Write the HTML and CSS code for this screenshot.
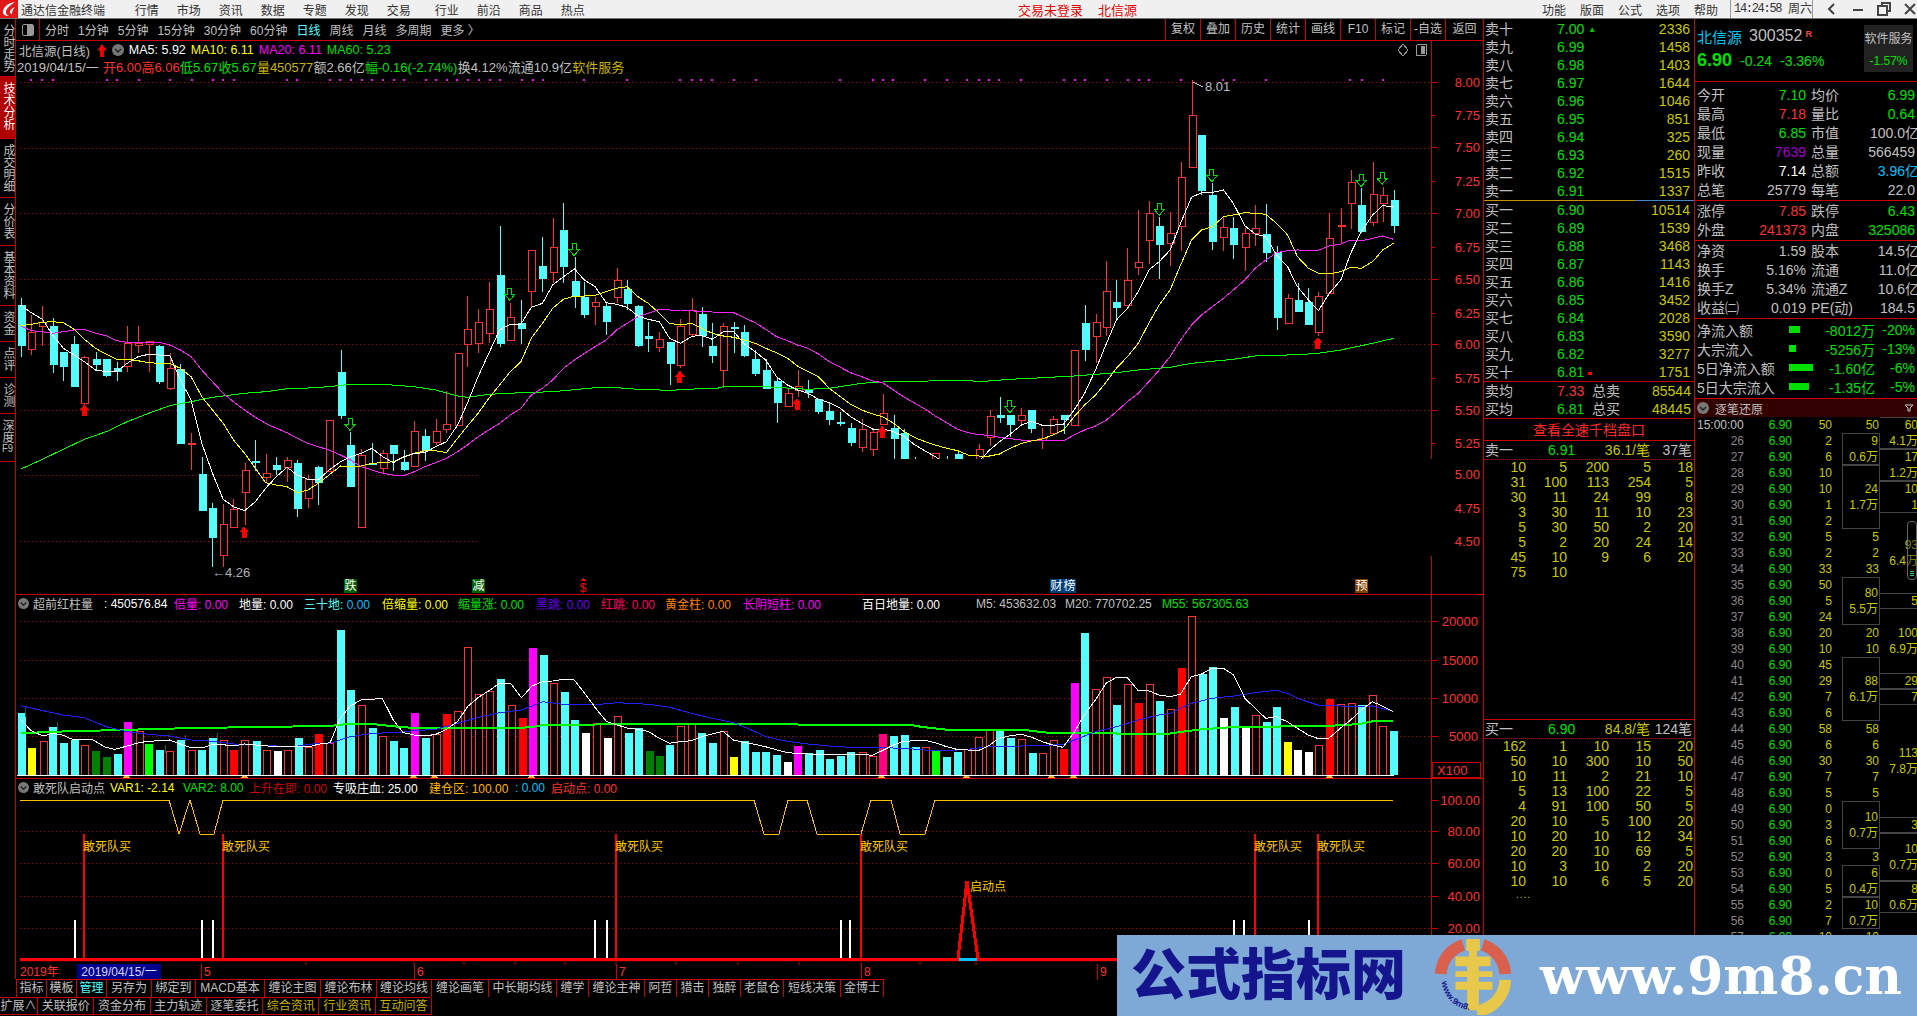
FILE: index.html
```html
<!DOCTYPE html>
<html lang="en">
<head>
    <meta charset="UTF-8">
    <title>通达信金融终端</title>
    <link rel="stylesheet" href="styles.css">
</head>
<body>
    <div class="titlebar">
        <svg class="app-logo" viewBox="0 0 18 18"><rect width="18" height="18" fill="#e01818"/><path d="M15 2C8 3 3 7 3 12c0 3 3 4 6 4-2-1-3-2-3-4 0-3 4-7 9-10z" fill="#fff"/><path d="M15 7c-3 1-5 3-5 5 0 1 1 2 2 2 0-3 1-5 3-7z" fill="#fff"/></svg>
        <span class="app-name">通达信金融终端</span>
        <nav class="menu">
            <span>行情</span><span>市场</span><span>资讯</span><span>数据</span><span>专题</span><span>发现</span><span>交易</span>
            <span class="menu-gap">行业</span><span>前沿</span><span>商品</span><span>热点</span>
        </nav>
        <span class="notice">交易未登录</span>
        <span class="notice notice-name">北信源</span>
        <nav class="menu menu-right">
            <span>功能</span><span>版面</span><span>公式</span><span>选项</span><span>帮助</span>
        </nav>
        <div class="clock"><span class="time">14:24:58</span><span>周六</span></div>
        <div class="win-btns">
            <svg viewBox="0 0 14 14"><path d="M9 2L4 7l5 5" fill="none" stroke="#444" stroke-width="2"/></svg>
            <svg viewBox="0 0 14 14"><path d="M2 8h10" stroke="#444" stroke-width="2"/></svg>
            <svg viewBox="0 0 14 14"><path d="M5 3V1h8v8h-3M1 4h9v9H1z" fill="none" stroke="#444" stroke-width="2"/></svg>
            <svg viewBox="0 0 14 14"><path d="M2 2l10 10M12 2L2 12" stroke="#444" stroke-width="2"/></svg>
        </div>
    </div>

    <div class="app">
        <div class="left">
            <div class="upper">
                <div class="side">
                    <div class="side-tab h58">分时走势</div>
                    <div class="side-tab h62 active">技术分析</div>
                    <div class="side-tab h59">成交明细</div>
                    <div class="side-tab h48">分价表</div>
                    <div class="side-tab h60">基本资料</div>
                    <div class="side-tab h36">资金</div>
                    <div class="side-tab h36">点评</div>
                    <div class="side-tab h36">诊测</div>
                    <div class="side-tab h48">深度<span class="f9">F9</span></div>
                </div>
                <div class="center">
                    <div class="toolbar">
                        <div class="tool-icon"><i></i></div>
                        <span class="period">分时</span><span class="period">1分钟</span><span class="period">5分钟</span><span class="period">15分钟</span><span class="period">30分钟</span><span class="period">60分钟</span><span class="period on">日线</span><span class="period">周线</span><span class="period">月线</span><span class="period">多周期</span><span class="period">更多 〉</span>
                        <div class="tool-right">
                            <span>复权</span><span>叠加</span><span>历史</span><span>统计</span><span>画线</span><span>F10</span><span>标记</span><span>-自选</span><span class="last">返回</span>
                        </div>
                    </div>

                    <div class="pane pane-main">
                        <svg id="mainChart" class="plot" viewBox="16 41 1467 553"></svg>
                        <div class="legend">
                            <span class="grey">北信源(日线)</span>
                            <svg class="up-mark" viewBox="0 0 10 14"><path d="M5 0l5 7H7v7H3V7H0z" fill="#f00"/></svg>
                            <svg class="chev" viewBox="0 0 12 12"><circle cx="6" cy="6" r="6" fill="#777"/><path d="M3 5l3 3 3-3" fill="none" stroke="#222" stroke-width="1.5"/></svg>
                            <span class="white">MA5: 5.92</span>
                            <span class="yellow">MA10: 6.11</span>
                            <span class="magenta">MA20: 6.11</span>
                            <span class="green">MA60: 5.23</span>
                        </div>
                        <div class="legend legend-bar">
                            <span class="grey legend-date">2019/04/15/一</span>
                            <span class="red">开6.00</span><span class="red">高6.06</span>
                            <span class="green">低5.67</span><span class="green">收5.67</span>
                            <span class="olive">量450577</span>
                            <span class="grey">额2.66亿</span>
                            <span class="green">幅-0.16(-2.74%)</span>
                            <span class="grey">换4.12%</span>
                            <span class="grey">流通10.9亿</span>
                            <span class="olive">软件服务</span>
                        </div>
                    </div>

                    <div class="pane pane-vol">
                        <svg id="volChart" class="plot" viewBox="16 594 1467 184"></svg>
                        <div class="pane-head">
                            <svg class="chev" viewBox="0 0 12 12"><circle cx="6" cy="6" r="6" fill="#777"/><path d="M3 5l3 3 3-3" fill="none" stroke="#222" stroke-width="1.5"/></svg>
                            <span class="grey w71">超前红柱量</span>
                            <span class="white w70">: 450576.84</span>
                            <span class="magenta w65">倍量: 0.00</span>
                            <span class="white w65">地量: 0.00</span>
                            <span class="cyan w78">三十地: <b class="sky">0.00</b></span>
                            <span class="yellow w76">倍缩量: 0.00</span>
                            <span class="green w78">缩量涨: 0.00</span>
                            <span class="purple w65">黑跳: 0.00</span>
                            <span class="pink w64">红跳: 0.00</span>
                            <span class="orange w78">黄金柱: 0.00</span>
                            <span class="magenta w119">长阴短柱: 0.00</span>
                            <span class="white w114">百日地量: 0.00</span>
                            <span class="grey w89">M5: 453632.03</span>
                            <span class="grey w97">M20: 770702.25</span>
                            <span class="green">M55: 567305.63</span>
                        </div>
                    </div>

                    <div class="pane pane-ind">
                        <svg id="indChart" class="plot" viewBox="16 778 1467 183"></svg>
                        <div class="pane-head">
                            <svg class="chev" viewBox="0 0 12 12"><circle cx="6" cy="6" r="6" fill="#777"/><path d="M3 5l3 3 3-3" fill="none" stroke="#222" stroke-width="1.5"/></svg>
                            <span class="grey w77">敢死队启动点</span>
                            <span class="yellow w73">VAR1: -2.14</span>
                            <span class="green w66">VAR2: 8.00</span>
                            <span class="maroon w84">上升在即: 0.00</span>
                            <span class="white w96">专吸庄血: 25.00</span>
                            <span class="gold w86">建仓区: 100.00</span>
                            <span class="sky w36">: 0.00</span>
                            <span class="red">启动点: 0.00</span>
                        </div>
                    </div>

                    <div class="date-axis">
                        <svg class="date-ticks" viewBox="0 0 1467 3"><path d="M290 0v3M398 0v3M448 0v3M499 0v3M549 0v3M600 0v3M660 0v3M722 0v3M783 0v3M845 0v3M904 0v3M960 0v3" stroke="#c00"/></svg>
                        <span class="year">2019年</span>
                        <span class="date-now">2019/04/15/一</span>
                        <span class="month m5">5</span>
                        <span class="month m6">6</span>
                        <span class="month m7">7</span>
                        <span class="month m8">8</span>
                        <span class="month m9">9</span>
                    </div>
                </div>
            </div>
            <div class="tabs tabs-one">
                <span>指标</span><span>模板</span><span class="cyan">管理</span><span>另存为</span><span>绑定到</span><span>MACD基本</span><span>缠论主图</span><span>缠论布林</span><span>缠论均线</span><span>缠论画笔</span><span>中长期均线</span><span>缠学</span><span>缠论主神</span><span>阿哲</span><span>猎击</span><span>独醉</span><span>老鼠仓</span><span>短线决策</span><span>金博士</span>
            </div>
            <div class="tabs tabs-two">
                <span>扩展∧</span><span>关联报价</span><span>资金分布</span><span>主力轨迹</span><span>逐笔委托</span><span class="olive">综合资讯</span><span class="olive">行业资讯</span><span class="olive">互动问答</span>
            </div>
        </div>

        <div class="book">
            <div id="sellRows"></div>
            <div class="mid-line"></div>
            <div id="buyRows"></div>
            <div class="avg-block">
                <div class="avg-row"><span class="grey">卖均</span><span class="red">7.33</span><span class="grey">总卖</span><span class="qty">85544</span></div>
                <div class="avg-row"><span class="grey">买均</span><span class="green">6.81</span><span class="grey">总买</span><span class="qty">48445</span></div>
            </div>
            <div class="deep-link">查看全速千档盘口</div>
            <div class="queue queue-sell">
                <div class="queue-head"><span class="grey">卖一</span><span class="green">6.91</span><span class="qty">36.1/笔</span><span class="grey">37笔</span></div>
                <div id="sellQueue" class="queue-grid"></div>
            </div>
            <div class="queue queue-buy">
                <div class="queue-head"><span class="grey">买一</span><span class="green">6.90</span><span class="qty">84.8/笔</span><span class="grey">124笔</span></div>
                <div id="buyQueue" class="queue-grid"></div>
                <div class="queue-more">....</div>
            </div>
        </div>

        <div class="quote">
            <div class="stock-head">
                <div class="stock-info">
                    <div class="stock-name"><span class="stock-title">北信源</span><span class="stock-code">300352</span><span class="stock-r">R</span></div>
                    <div class="stock-price"><b>6.90</b><span>-0.24</span><span>-3.36%</span></div>
                </div>
                <div class="sector"><span>软件服务</span><span class="green">-1.57%</span></div>
            </div>
            <div class="q-block q-first">
                <div class="q-row"><span>今开</span><span class="green">7.10</span><span>均价</span><span class="green">6.99</span></div>
                <div class="q-row"><span>最高</span><span class="red">7.18</span><span>量比</span><span class="green">0.64</span></div>
                <div class="q-row"><span>最低</span><span class="green">6.85</span><span>市值</span><span class="grey cut">100.0亿</span></div>
                <div class="q-row"><span>现量</span><span class="violet">7639</span><span>总量</span><span class="grey">566459</span></div>
                <div class="q-row"><span>昨收</span><span class="white">7.14</span><span>总额</span><span class="sky cut">3.96亿</span></div>
                <div class="q-row"><span>总笔</span><span class="grey">25779</span><span>每笔</span><span class="grey">22.0</span></div>
            </div>
            <div class="q-block">
                <div class="q-row"><span>涨停</span><span class="red">7.85</span><span>跌停</span><span class="green">6.43</span></div>
                <div class="q-row"><span>外盘</span><span class="red">241373</span><span>内盘</span><span class="green">325086</span></div>
            </div>
            <div class="q-block">
                <div class="q-row"><span>净资</span><span class="grey">1.59</span><span>股本</span><span class="grey cut">14.5亿</span></div>
                <div class="q-row"><span>换手</span><span class="grey">5.16%</span><span>流通</span><span class="grey cut">11.0亿</span></div>
                <div class="q-row"><span>换手Z</span><span class="grey">5.34%</span><span>流通Z</span><span class="grey cut">10.6亿</span></div>
                <div class="q-row"><span>收益㈡</span><span class="grey">0.019</span><span>PE(动)</span><span class="grey">184.5</span></div>
            </div>
            <div class="q-block q-last">
                <div class="flow-row"><span>净流入额</span><i class="flow-bar w11"></i><span class="green flow-val">-8012万</span><span class="green flow-pct">-20%</span></div>
                <div class="flow-row"><span>大宗流入</span><i class="flow-bar w7"></i><span class="green flow-val">-5256万</span><span class="green flow-pct">-13%</span></div>
                <div class="flow-row"><span>5日净流入额</span><i class="flow-bar w24"></i><span class="green flow-val">-1.60亿</span><span class="green flow-pct">-6%</span></div>
                <div class="flow-row"><span>5日大宗流入</span><i class="flow-bar w20"></i><span class="green flow-val">-1.35亿</span><span class="green flow-pct">-5%</span></div>
            </div>
            <div class="tick-head">
                <svg class="chev big" viewBox="0 0 12 12"><circle cx="6" cy="6" r="6" fill="#777"/><path d="M3 5l3 3 3-3" fill="none" stroke="#222" stroke-width="1.5"/></svg>
                <span>逐笔还原</span>
                <svg class="funnel" viewBox="0 0 8 8"><path d="M0 1h8L5 4v3H3V4z" fill="none" stroke="#ccc"/></svg>
            </div>
            <div id="ticks" class="ticks"></div>
            <div class="scroll-thumb"><i></i><i></i><i></i></div>
        </div>
    </div>

    <div class="watermark">
        <span class="wm-name">公式指标网</span>
        <svg class="wm-logo" viewBox="0 0 80 80">
            <defs><path id="wmArc" d="M8 46A32 32 0 0 0 38 75"/></defs>
            <path d="M7 38A33 33 0 0 1 30 8M50 8A33 33 0 0 1 73 38" fill="none" stroke="#d8604c" stroke-width="12"/>
            <path d="M73 44A33 33 0 0 1 44 76" fill="none" stroke="#e8c84a" stroke-width="12"/>
            <path d="M33 2h14v12h-3v6h14v10H46v5h14v6H46v5h14v8H46v21H34V54H22v-8h12v-5H22v-6h12v-5H22V20h14v-6h-3z" fill="#e8c84a"/>
            <text class="wm-arc-text"><textPath href="#wmArc">www.9m8.cn</textPath></text>
        </svg>
        <span class="wm-url">www.9m8.cn</span>
    </div>

    <script src="chart.js"></script>
</body>
</html>
```

FILE: styles.css
```css
* {
    box-sizing: border-box;
}

html, body {
    margin: 0;
    width: 1917px;
    height: 1016px;
    overflow: hidden;
}

body {
    position: relative;
    background: #000;
    color: #c0c0c0;
    font-family: "Liberation Sans", "Noto Sans CJK SC", sans-serif;
    font-size: 12px;
}

b { font-weight: normal; }

.grey { color: #c0c0c0; }
.white { color: #fff; }
.yellow { color: #ff0; }
.magenta { color: #f0f; }
.green { color: #00e000; }
.red { color: #ff3232; }
.olive { color: #c8b400; }
.cyan { color: #54fcfc; }
.sky { color: #00c0ff; }
.purple { color: #6a00f0; }
.pink { color: #ff0060; }
.orange { color: #ff8000; }
.maroon { color: #d00000; }
.gold { color: #ffb400; }
.violet { color: #a000d0; }

/* title bar */
.titlebar {
    display: flex;
    align-items: center;
    height: 19px;
    background: #f0f0f0;
    color: #333;
    border-bottom: 1px solid #777;
    white-space: nowrap;
}

.app-logo {
    width: 18px;
    height: 18px;
    flex: none;
}

.app-name {
    margin-left: 3px;
    width: 116px;
}

.menu {
    display: flex;
    gap: 18px;
}

.menu .menu-gap {
    margin-left: 6px;
}

.notice {
    margin-left: 433px;
    color: #e00000;
    font-size: 13px;
}

.notice-name {
    margin-left: 15px;
}

.menu-right {
    margin-left: 405px;
    gap: 14px;
}

.clock {
    display: flex;
    gap: 7px;
    width: 84px;
    height: 18px;
    line-height: 18px;
    margin-left: 12px;
    padding-left: 3px;
    border-left: 1px solid #999;
    border-right: 1px solid #999;
}

.time {
    font-family: "Liberation Mono", monospace;
    font-size: 12px;
    letter-spacing: -1.3px;
    width: 47px;
}

.win-btns {
    display: flex;
    gap: 12px;
    margin-left: 12px;
}

.win-btns svg {
    width: 14px;
    height: 14px;
}

/* layout */
.app {
    display: flex;
    height: 997px;
}

.left {
    width: 1483px;
    flex: none;
}

.upper {
    display: flex;
    height: 960px;
}

/* vertical tabs */
.side {
    width: 16px;
    flex: none;
    border-right: 1px solid #c00;
}

.side-tab {
    writing-mode: vertical-rl;
    text-orientation: upright;
    width: 15px;
    padding-top: 5px;
    line-height: 15px;
    border-bottom: 1px solid #c00;
    font-size: 12px;
    letter-spacing: 0;
}

.side-tab.active {
    background: #b00000;
    color: #fff;
}

.f9 {
    text-combine-upright: all;
    font-size: 10px;
}

.h36 { height: 36px; }
.h48 { height: 48px; }
.h58 { height: 58px; }
.h59 { height: 59px; }
.h60 { height: 60px; }
.h62 { height: 62px; }

.center {
    flex: 1;
    min-width: 0;
}

/* period toolbar */
.toolbar {
    display: flex;
    align-items: center;
    height: 22px;
    border-bottom: 1px solid #c00;
}

.tool-icon {
    display: flex;
    align-items: center;
    justify-content: center;
    width: 24px;
    height: 21px;
    margin-right: 5px;
    border-right: 1px solid #c00;
}

.tool-icon i {
    width: 12px;
    height: 12px;
    border: 1px solid #999;
    border-radius: 2px;
    background: linear-gradient(90deg, #000 45%, #999 45%);
}

.period {
    margin-right: 9px;
    white-space: nowrap;
}

.period.on {
    color: #54fcfc;
}

.tool-right {
    display: flex;
    margin-left: auto;
    height: 21px;
}

.tool-right span {
    width: 35px;
    line-height: 21px;
    text-align: center;
    border-left: 1px solid #c00;
}

.tool-right .last {
    width: 38px;
}

/* chart panes */
.pane {
    position: relative;
    overflow: hidden;
}

.pane-main { height: 553px; }
.pane-vol { height: 184px; }
.pane-ind { height: 183px; }

.plot {
    position: absolute;
    left: 0;
    top: 0;
    width: 1467px;
    height: 100%;
    shape-rendering: crispEdges;
}

.plot text {
    font-family: "Liberation Sans", "Noto Sans CJK SC", sans-serif;
}

.legend {
    position: relative;
    display: flex;
    align-items: center;
    gap: 5px;
    height: 16px;
    margin-top: 1px;
    padding-left: 3px;
    font-size: 12.5px;
    white-space: nowrap;
}

.legend-bar {
    gap: 0.2px;
    margin-top: 0;
    padding-left: 1px;
    font-size: 13px;
}

.legend-date {
    margin-right: 4px;
}

.up-mark {
    width: 10px;
    height: 13px;
    margin-left: 2px;
}

.chev {
    width: 12px;
    height: 12px;
    flex: none;
}

.pane-head {
    position: relative;
    display: flex;
    align-items: center;
    height: 17px;
    margin-top: 1px;
    padding-left: 2px;
    white-space: nowrap;
}

.pane-head .chev {
    margin-right: 4px;
    width: 11px;
    height: 11px;
}

.w36 { width: 36px; }
.w64 { width: 64px; }
.w65 { width: 65px; }
.w66 { width: 66px; }
.w70 { width: 70px; }
.w71 { width: 71px; }
.w73 { width: 73px; }
.w76 { width: 76px; }
.w77 { width: 77px; }
.w78 { width: 78px; }
.w84 { width: 84px; }
.w86 { width: 86px; }
.w89 { width: 89px; }
.w96 { width: 96px; }
.w97 { width: 97px; }
.w114 { width: 114px; }
.w119 { width: 119px; }

/* date axis */
.date-axis {
    position: relative;
    height: 18px;
    line-height: 16px;
    color: #ff3232;
    border-top: 1px solid #300;
}

.date-ticks {
    position: absolute;
    left: 0;
    top: 0;
    width: 1467px;
    height: 3px;
}

.year {
    position: absolute;
    left: 4px;
    top: 2px;
}

.date-now {
    position: absolute;
    left: 61px;
    top: 2px;
    width: 84px;
    height: 15px;
    background: #000090;
    color: #d8d8ff;
    text-align: center;
}

.month {
    position: absolute;
    top: 2px;
    padding-left: 2px;
    border-left: 1px solid #c00;
}

.m5 { left: 185px; }
.m6 { left: 398px; }
.m7 { left: 600px; }
.m8 { left: 845px; }
.m9 { left: 1081px; }

/* bottom tabs */
.tabs {
    display: grid;
    height: 18px;
    line-height: 17px;
    border-top: 1px solid #c00;
    white-space: nowrap;
}

.tabs span {
    text-align: center;
    border-right: 1px solid #c00;
}

.tabs-one {
    margin-left: 16px;
    width: 869px;
    border-left: 1px solid #c00;
    grid-template-columns: 30px 30px 30px 45px 44px 69px 56px 56px 55px 57px 68px 32px 56px 32px 32px 32px 43px 57px 43px;
}

.tabs-two {
    width: 431px;
    border-bottom: 1px solid #c00;
    height: 18px;
    grid-template-columns: 38px repeat(7, 56.3px);
}

/* order book */
.book {
    width: 212px;
    flex: none;
    border-left: 1px solid #c00;
    border-right: 1px solid #c00;
    font-size: 14px;
    white-space: nowrap;
}

#sellRows {
    padding-top: 1px;
}

.ob-row {
    display: grid;
    grid-template-columns: 72px 1fr auto;
    height: 18px;
    line-height: 18px;
    padding: 0 4px 0 1px;
}

.ob-row .qty, .qty {
    color: #c8c800;
}

.ob-mark {
    display: inline-block;
    margin-left: 4px;
    vertical-align: middle;
}

.mark-up {
    color: #0c0;
    font-size: 8px;
}

.mark-dn {
    width: 4px;
    height: 3px;
    background: #f00;
}

.mid-line {
    height: 1px;
    background: linear-gradient(90deg, #c89000 72%, #4488cc 72%);
}

#buyRows {
    border-bottom: 1px solid #c00;
}

.avg-block {
    border-bottom: 1px solid #c00;
    height: 37px;
}

.avg-row {
    display: grid;
    grid-template-columns: 72px 35px 60px 1fr;
    height: 18px;
    line-height: 18px;
    padding: 0 4px 0 1px;
}

.avg-row span:last-child {
    text-align: right;
}

.deep-link {
    height: 22px;
    line-height: 22px;
    text-align: center;
    color: #ff2828;
    border-bottom: 1px solid #c00;
}

.queue-sell {
    height: 279px;
    border-bottom: 1px solid #c00;
}

.queue-head {
    display: grid;
    grid-template-columns: 63px 40px 62px 1fr;
    height: 19px;
    line-height: 19px;
    padding: 0 2px 0 1px;
    border-bottom: 1px dotted #c00;
}

.queue-head span:nth-child(n+3) {
    text-align: right;
}

.queue-grid {
    display: grid;
    grid-template-columns: 41px 41px 42px 42px 42px;
    grid-auto-rows: 15px;
    line-height: 15px;
    padding-left: 1px;
    color: #c8c800;
    text-align: right;
}

.queue-more {
    margin-left: 32px;
    line-height: 12px;
    color: #c8c800;
    font-size: 10px;
    letter-spacing: 1px;
}

/* quote column */
.quote {
    position: relative;
    flex: 1;
    min-width: 0;
    overflow: hidden;
    font-size: 14px;
    white-space: nowrap;
}

.stock-head {
    display: flex;
    justify-content: space-between;
    height: 62px;
    padding: 6px 4px 0 2px;
}

.stock-info {
    padding-top: 1px;
}

.stock-name {
    display: flex;
    align-items: center;
    height: 20px;
}

.stock-title {
    color: #00c8f0;
    font-size: 15px;
}

.stock-code {
    margin-left: 7px;
    font-size: 16px;
}

.stock-r {
    margin-left: 3px;
    margin-top: -5px;
    color: #ff4040;
    font-size: 9px;
    font-weight: bold;
}

.stock-price {
    display: flex;
    align-items: baseline;
    gap: 8px;
    margin-top: 4px;
    color: #00e000;
}

.stock-price b {
    font-size: 18px;
    font-weight: bold;
}

.sector {
    display: flex;
    flex-direction: column;
    justify-content: space-around;
    align-items: center;
    width: 49px;
    height: 47px;
    margin-top: 0;
    background: #222;
    font-size: 12px;
}

.q-block {
    padding-top: 1px;
    border-top: 1px solid #c00;
}

.q-first {
    padding-top: 4px;
}

.q-last {
    padding-bottom: 2px;
}

.q-row {
    display: grid;
    grid-template-columns: 50px 59px 57px 1fr;
    height: 19px;
    line-height: 19px;
    padding: 0 2px;
}

.q-row span:nth-child(even) {
    text-align: right;
}

.q-row span:nth-child(3) {
    padding-left: 5px;
}

.q-row .cut {
    margin-right: -4px;
}

.flow-row {
    display: flex;
    align-items: center;
    height: 19px;
    padding: 0 1px 0 2px;
}

.flow-row span:first-child {
    width: 92px;
}

.flow-bar {
    height: 7px;
    background: #00e000;
}

.flow-val {
    position: absolute;
    right: 42px;
}

.flow-pct {
    position: absolute;
    right: 2px;
}

.w7 { width: 7px; }
.w11 { width: 11px; }
.w20 { width: 20px; }
.w24 { width: 24px; }

.tick-head {
    display: flex;
    align-items: center;
    height: 19px;
    padding-left: 2px;
    background: #300;
    border-top: 1px solid #c00;
    font-size: 12px;
}

.chev.big {
    width: 12px;
    height: 12px;
    margin-right: 6px;
}

.funnel {
    width: 8px;
    height: 8px;
    margin-left: auto;
    margin-right: 4px;
}

.ticks {
    display: grid;
    grid-template-columns: 49px 48px 40px 48px 37px;
    grid-auto-rows: 16px;
    height: 518px;
    overflow: hidden;
    line-height: 16px;
    font-size: 12px;
    text-align: right;
}

.tick-time { text-align: left; padding-left: 2px; grid-column: 1; }
.tick-no { color: #888; }
.tick-price { color: #00e000; }
.tick-qty, .tick-sum { color: #c8c800; }

.tick-sum {
    display: flex;
    flex-direction: column;
    justify-content: center;
    padding-right: 1px;
    overflow: hidden;
}

.col4.boxed {
    margin-left: 10px;
    border: 1px solid #444;
}

.col5.boxed {
    border-top: 1px solid #444;
    border-bottom: 1px solid #444;
}

.col5 {
    margin-right: -2px;
}

.scroll-thumb {
    position: absolute;
    right: 0;
    top: 502px;
    display: flex;
    flex-direction: column;
    justify-content: flex-end;
    gap: 1px;
    width: 10px;
    height: 59px;
    padding: 0 2px 3px;
    border: 1px solid #666;
    border-radius: 4px;
    background: rgba(0, 0, 0, 0.4);
}

.scroll-thumb i {
    height: 1px;
    background: #3c8;
}

/* watermark strip */
.watermark {
    position: absolute;
    left: 1117px;
    top: 935px;
    display: flex;
    align-items: center;
    width: 800px;
    height: 81px;
    background: #7ea9d6;
    white-space: nowrap;
}

.wm-name {
    margin-left: 14px;
    color: #14148c;
    font-size: 55px;
    line-height: 81px;
    font-weight: 900;
    letter-spacing: 0;
}

.wm-logo {
    width: 78px;
    height: 78px;
    margin-left: 28px;
}

.wm-arc-text {
    font-family: "Liberation Sans", sans-serif;
    font-size: 9px;
    font-weight: bold;
    fill: #14148c;
}

.wm-url {
    margin-left: 28px;
    color: #fff;
    font-family: "DejaVu Serif", serif;
    font-size: 52px;
    line-height: 81px;
    font-weight: bold;
}
```

FILE: chart.js
```js
// screen positions were read off the chart, x,y per series
const CYAN = '#54fcfc', RED = '#ff3232';

const lx = z => z / 2.24;
const rx = z => 700 + z / 2.01;
const py = z => 60 + z / 3;

// x, body top, body bottom, high, low, type (c cyan, r hollow red, f flat red)
const candlesL = [
    [46,735,857,715,890,'c'],[70,817,866,765,885,'r'],[95,785,797,738,857,'r'],[118,798,915,775,938,'c'],
    [142,877,920,877,962,'c'],[166,852,980,828,980,'c'],[189,890,1030,888,1030,'r'],[214,897,915,877,930,'c'],
    [238,897,947,897,952,'c'],[261,925,936,905,962,'c'],[285,850,918,798,935,'r'],[309,850,855,798,880,'r'],
    [333,842,852,842,935,'r'],[357,858,965,855,972,'c'],[380,925,983,880,990,'r'],[404,927,1151,912,1151,'c'],
    [428,1150,1155,1118,1230,'f'],[452,1242,1352,1190,1352,'c'],[476,1344,1433,1330,1520,'c'],[500,1393,1484,1332,1520,'r'],
    [523,1348,1400,1318,1403,'r'],[548,1231,1295,1208,1395,'r'],[572,1203,1208,1140,1232,'c'],[595,1240,1252,1182,1268,'r'],
    [619,1215,1230,1190,1245,'c'],[642,1201,1220,1190,1265,'r'],[666,1210,1346,1200,1370,'c'],[690,1258,1315,1245,1343,'r'],
    [713,1221,1270,1218,1335,'c'],[737,1081,1232,1081,1232,'r'],[763,936,1067,870,1078,'c'],[785,1156,1280,1117,1280,'c'],
    [809,1184,1400,1168,1400,'r'],[833,1210,1213,1150,1215,'c'],[857,1178,1223,1170,1238,'r'],[881,1156,1182,1156,1232,'c'],
    [904,1207,1230,1170,1232,'c'],[928,1114,1217,1083,1220,'r'],[952,1128,1172,1107,1202,'c'],[976,1114,1145,1077,1155,'r'],
    [1000,1093,1108,993,1118,'r'],[1025,880,1096,880,1096,'r'],[1047,808,853,708,920,'r'],[1071,785,848,747,878,'r'],
    [1095,747,818,667,850,'r'],[1119,645,852,498,862,'c'],[1143,772,841,730,842,'r'],[1167,790,808,720,852,'c'],
    [1190,571,694,571,742,'r'],[1215,618,656,530,695,'c'],[1238,562,637,473,668,'r'],[1262,510,621,430,668,'c'],
    [1287,663,710,592,745,'c'],[1309,710,765,665,775,'c'],[1333,727,739,712,795,'r'],[1358,738,785,725,825,'c'],
    [1381,661,710,625,730,'r'],[1405,687,732,660,750,'c'],[1429,738,858,735,860,'c'],[1452,828,836,785,875,'c'],
    [1477,838,862,815,875,'r'],[1500,847,911,847,975,'c'],[1524,799,915,778,925,'r'],[1549,750,823,714,830,'r']
];
const candlesR = [
    [4,762,828,740,860,'c'],[25,858,888,790,908,'c'],[47,799,931,790,985,'r'],[68,802,806,785,880,'c'],
    [89,816,888,795,890,'c'],[111,897,942,870,947,'c'],[132,930,986,897,988,'c'],[154,963,1028,955,1088,'c'],
    [176,1000,1037,985,1037,'r'],[196,977,990,930,1010,'r'],[217,990,998,960,1013,'c'],[238,1016,1056,1016,1062,'c'],
    [260,1053,1079,1030,1094,'c'],[282,1085,1087,1055,1098,'c'],[303,1104,1148,1090,1157,'c'],[325,1108,1160,1078,1175,'r'],
    [347,1117,1166,1105,1187,'r'],[367,1058,1093,1002,1093,'r'],[389,1104,1137,1065,1250,'c'],[411,1120,1250,1108,1250,'c'],
    [432,1196,1250,1190,1250,'c'],[473,1180,1250,1180,1250,'r'],[496,1250,1250,1188,1250,'c'],[518,1183,1250,1170,1250,'c'],
    [560,1168,1250,1152,1250,'r'],[582,1069,1130,1050,1157,'r'],[602,1065,1073,1012,1090,'c'],[624,1065,1095,1065,1130,'c'],
    [646,1066,1079,1045,1098,'r'],[666,1050,1106,1050,1118,'c'],[688,1133,1141,1105,1167,'r'],[709,1077,1120,1067,1125,'r'],
    [731,1066,1080,1066,1122,'c'],[752,871,1096,871,1096,'r'],[773,790,870,735,902,'c'],[795,787,829,762,910,'r'],
    [817,694,800,603,828,'r'],[837,727,743,660,778,'c'],[859,661,735,565,735,'r'],[881,607,620,450,645,'r'],
    [902,460,539,423,612,'r'],[923,498,554,472,658,'c'],[945,520,548,456,618,'r'],[966,352,497,306,572,'r'],
    [988,166,320,60,320,'r'],[1008,225,392,225,405,'c'],[1030,405,545,370,570,'c'],[1052,500,532,468,572,'r'],
    [1072,505,554,470,597,'c'],[1095,520,560,505,634,'r'],[1116,505,518,435,558,'r'],[1137,522,578,433,605,'c'],
    [1159,575,773,558,810,'c'],[1181,715,788,703,790,'r'],[1201,721,755,670,755,'c'],[1223,727,794,685,795,'c'],
    [1243,709,815,695,828,'r'],[1265,535,698,460,698,'r'],[1288,496,499,445,548,'f'],[1308,367,430,330,507,'r'],
    [1329,435,516,385,518,'c'],[1352,403,485,307,497,'r'],[1372,406,430,381,485,'r'],[1394,420,497,390,520,'c']
];

const ma5 = [[46,735,70,758,95,778,118,825,142,865,166,885,189,905,214,930,238,935,261,935,285,910,309,890,333,883,357,885,380,885,404,960,428,1020,452,1150,476,1240,500,1318,523,1340,548,1352,572,1325,595,1285,619,1250,643,1222,666,1245,690,1258,713,1260,737,1230,763,1205,785,1190,809,1180,833,1165,857,1190,881,1208,904,1190,928,1180,952,1178,976,1160,1000,1145,1025,1095,1047,1030,1071,950,1095,880,1119,810,1143,793,1167,792,1190,742,1215,730,1238,675,1262,650,1287,627,1309,660,1333,680,1358,728,1381,733,1405,742,1429,768,1452,778,1477,785,1500,835,1524,850,1549,830],
    [0,825,25,838,47,815,68,815,89,852,111,875,132,900,154,950,176,975,196,990,217,1000,238,1018,260,1028,282,1045,303,1070,325,1090,347,1107,367,1107,389,1115,411,1130,432,1155,473,1190,496,1215,539,1230,560,1205,582,1170,602,1145,624,1122,646,1095,666,1084,688,1096,709,1096,731,1092,752,1050,773,1000,795,930,817,850,837,780,859,745,881,695,902,630,923,605,945,570,966,490,988,412,1008,398,1030,397,1052,390,1072,430,1095,497,1116,522,1137,530,1159,585,1181,620,1201,680,1223,720,1243,752,1265,700,1288,660,1308,580,1329,515,1352,465,1372,437,1394,440]];
const ma10 = [[46,797,70,793,95,787,118,785,142,788,166,808,189,838,214,865,238,883,261,898,285,898,309,902,333,908,357,910,380,910,404,925,428,950,452,1010,476,1050,500,1090,523,1140,548,1180,572,1225,595,1268,619,1275,643,1280,666,1298,690,1290,713,1270,737,1245,763,1218,785,1220,809,1218,833,1210,857,1208,881,1205,904,1192,928,1180,952,1172,976,1172,1000,1178,1025,1135,1047,1098,1071,1060,1095,1015,1119,975,1143,935,1167,905,1190,835,1215,790,1238,745,1262,718,1287,708,1309,708,1333,706,1358,695,1381,685,1405,680,1429,710,1452,730,1477,760,1500,790,1524,795,1549,790],
    [0,803,25,820,47,828,68,832,89,840,111,850,132,865,154,878,176,895,196,918,217,935,238,950,260,985,282,1010,303,1033,325,1050,347,1062,367,1070,389,1090,411,1115,432,1133,453,1145,473,1155,496,1165,518,1172,539,1185,560,1188,582,1188,602,1182,624,1165,646,1150,666,1143,688,1137,709,1125,731,1110,752,1070,773,1035,795,1005,817,965,837,925,859,890,881,850,902,790,923,735,945,690,966,615,988,540,1008,510,1030,500,1052,470,1072,465,1095,458,1116,460,1137,463,1159,490,1181,525,1201,590,1223,625,1243,640,1265,642,1288,635,1308,622,1329,625,1352,605,1372,570,1394,550]];
const ma20 = [[46,797,70,812,95,815,118,820,142,815,166,810,189,808,214,820,238,827,261,842,285,847,333,847,357,847,380,855,404,870,428,890,452,930,476,965,500,1000,523,1025,548,1050,572,1072,595,1090,619,1105,643,1118,666,1135,690,1150,713,1160,737,1170,763,1185,785,1200,809,1220,833,1230,857,1240,881,1245,904,1247,928,1235,952,1220,976,1208,1000,1195,1025,1175,1047,1155,1071,1130,1095,1110,1119,1090,1143,1065,1167,1045,1190,1005,1215,985,1238,960,1262,925,1287,900,1309,880,1333,860,1358,840,1381,810,1405,790,1429,770,1452,760,1477,748,1500,750,1524,750,1549,752],
    [0,755,25,756,68,758,89,773,111,788,132,808,154,830,176,842,196,855,217,865,238,882,260,905,282,922,303,938,325,950,347,963,367,968,389,990,411,1012,432,1030,453,1048,473,1068,496,1088,518,1108,539,1118,560,1124,582,1126,602,1132,624,1136,646,1140,666,1140,688,1143,731,1142,752,1125,773,1110,795,1098,817,1080,837,1055,859,1025,881,1000,902,965,923,930,945,890,966,840,988,795,1008,765,1030,740,1052,715,1072,690,1095,660,1116,625,1137,600,1159,578,1181,572,1201,570,1243,571,1265,558,1288,552,1308,540,1329,543,1352,535,1372,528,1394,538]];
const ma60 = [[46,1228,95,1198,142,1168,189,1138,238,1115,285,1085,333,1060,380,1037,428,1025,476,1012,548,1000,595,995,643,986,690,984,737,980,785,973,857,973,928,980,976,990,1025,1008,1047,1012,1095,1003,1167,998,1238,995,1333,983,1381,983,1429,988,1500,991,1549,988],
    [0,985,35,985,47,980,132,980,217,988,260,985,325,970,367,966,460,963,545,962,560,965,624,958,666,955,752,948,837,938,881,930,945,922,988,910,1072,898,1116,888,1201,884,1243,880,1288,870,1352,850,1394,835]];

const dotsL = [68,92,116,238,260,308,378,428,474,497,522,640,664,736,760,784,808,830,855,880,903,952,975,1000,1022,1047,1070,1095,1118,1167,1192,1214,1307,1403,1522,1548];
const dotsR = [0,22,65,107,273,337,357,377,440,482,522,545,565,585,628,711,733,753,795,836,858,878,941,1024,1045,1107,1273,1296,1337];

function seriesPoints(parts, fxs, fy) {
    let pts = [];
    parts.forEach((arr, p) => {
        for (let i = 0; i < arr.length; i += 2) {
            pts.push(fxs[p](arr[i]).toFixed(1) + ',' + fy(arr[i + 1]).toFixed(1));
        }
    });
    return pts.join(' ');
}

function polyline(points, color, width) {
    return `<polyline points="${points}" fill="none" stroke="${color}" stroke-width="${width || 1}"/>`;
}

function gridLine(x1, x2, y) {
    return `<line x1="${x1}" x2="${x2}" y1="${y + 0.5}" y2="${y + 0.5}" stroke="#c00000" stroke-dasharray="1 3"/>`;
}

function axisLabel(text, y, x) {
    return `<text x="${x || 1480}" y="${y + 5}" text-anchor="end" font-size="13" fill="#ff3232">${text}</text>`;
}

function drawCandle(c, fx) {
    const x = Math.round(fx(c[0]));
    const top = Math.round(py(c[1])), bot = Math.round(py(c[2]));
    const hi = py(c[3]), lo = py(c[4]);
    const color = c[5] === 'c' ? CYAN : RED;
    let s = `<line x1="${x + 0.5}" x2="${x + 0.5}" y1="${hi}" y2="${top}" stroke="${color}"/>`;
    s += `<line x1="${x + 0.5}" x2="${x + 0.5}" y1="${bot}" y2="${lo}" stroke="${color}"/>`;
    if (c[5] === 'r') {
        s += `<rect x="${x - 3 + 0.5}" y="${top + 0.5}" width="7" height="${bot - top}" fill="#000" stroke="${color}"/>`;
    } else {
        s += `<rect x="${x - 3}" y="${top}" width="8" height="${Math.max(bot - top, 2)}" fill="${color}"/>`;
    }
    return s;
}

function upArrow(x, y) {
    return `<path transform="translate(${x} ${y})" d="M0 -6l5 6h-2.5v6h-5v-6h-2.5z" fill="#f00"/>`;
}

function downArrow(x, y) {
    return `<path transform="translate(${x} ${y})" d="M-2 -6h4v6h3l-5 6l-5 -6h3z" fill="#000" stroke="#00e000"/>`;
}

function marker(x, text, bg, fg) {
    return `<rect x="${x - 6}" y="579" width="13" height="14" fill="${bg}"/><text x="${x + 0.5}" y="590" text-anchor="middle" font-size="12" fill="${fg}">${text}</text>`;
}

function drawMain() {
    const fxs = [lx, rx];
    let s = '';
    [[82, 1431], [148, 1431], [213, 1431], [279, 1431], [344, 1431], [410, 1431], [475, 478], [541, 478]].forEach(g => {
        s += gridLine(20, g[1], g[0]);
    });
    dotsL.forEach(d => { s += `<rect x="${Math.round(lx(d))}" y="79" width="2" height="2" fill="#f0f"/>`; });
    dotsR.forEach(d => { s += `<rect x="${Math.round(700 + d / 1.96)}" y="79" width="2" height="2" fill="#f0f"/>`; });
    candlesL.forEach(c => { s += drawCandle(c, lx); });
    candlesR.forEach(c => { s += drawCandle(c, rx); });
    s += polyline(seriesPoints(ma60, fxs, py), '#00ff00');
    s += polyline(seriesPoints(ma20, fxs, py), '#ff20ff');
    s += polyline(seriesPoints(ma10, fxs, py), '#ffff00');
    s += polyline(seriesPoints(ma5, fxs, py), '#ffffff');
    [[189, 1051], [547, 1417], [1523, 950]].forEach(a => { s += upArrow(lx(a[0]), py(a[1])); });
    [[195, 1033], [366, 1115], [1242, 850]].forEach(a => { s += upArrow(rx(a[0]), py(a[1])); });
    [[784, 1093], [1142, 703], [1286, 569]].forEach(a => { s += downArrow(lx(a[0]), py(a[1])); });
    [[623, 1040], [923, 448], [1029, 347], [1329, 362], [1371, 355]].forEach(a => { s += downArrow(rx(a[0]), py(a[1])); });

    // the lower right of the price area is blank in the terminal
    s += '<rect x="478" y="459" width="954" height="119" fill="#000"/>';

    s += '<line x1="1431.5" x2="1431.5" y1="41" y2="459" stroke="#c00"/><line x1="1431.5" x2="1431.5" y1="556" y2="594" stroke="#c00"/>';
    const ticks = [[82, '8.00'], [115, '7.75'], [147, '7.50'], [181, '7.25'], [213, '7.00'], [247, '6.75'], [279, '6.50'], [313, '6.25'], [344, '6.00'], [378, '5.75'], [410, '5.50'], [443, '5.25'], [474, '5.00'], [508, '4.75'], [541, '4.50']];
    ticks.forEach((t, i) => {
        if (t[0] < 459) s += `<line x1="1431" x2="${i % 2 ? 1435 : 1438}" y1="${t[0] + 0.5}" y2="${t[0] + 0.5}" stroke="#c00"/>`;
        s += axisLabel(t[1], t[0]);
    });
    s += `<text x="1205" y="91" font-size="13" fill="#b8c0c8">8.01</text><path d="M1193 82l10 5" stroke="#ccc" fill="none"/>`;
    s += `<text x="212" y="577" font-size="13" fill="#b0b0b0">←4.26</text>`;
    s += marker(350, '跌', '#006000', '#fff') + marker(478, '减', '#006000', '#fff');
    s += `<text x="583" y="592" text-anchor="middle" font-size="12" fill="#f00">$</text>`;
    s += `<path d="M580 581l3 -3l3 3z" fill="#f00"/>`;
    s += marker(1056, '财', '#004078', '#fff') + marker(1069, '榜', '#004078', '#fff');
    s += marker(1361, '预', '#804000', '#fff');
    s += `<path transform="translate(1403 50)" d="M0 -6l5 6l-5 6l-5 -6z" fill="none" stroke="#999"/>`;
    s += `<rect x="1416.5" y="44.5" width="10" height="11" rx="1.5" fill="none" stroke="#999"/><rect x="1421" y="46" width="4" height="8" fill="#999"/>`;
    document.getElementById('mainChart').innerHTML = s;
}

// x, top, colour key
const barsL = [[43,339,'c'],[65,444,'y'],[89,424,'r'],[109,381,'c'],[132,429,'c'],[155,420,'c'],[176,436,'r'],[199,453,'d'],[222,471,'d'],[244,462,'c'],[266,366,'m'],[290,392,'r'],[310,432,'g'],[333,450,'c'],[354,454,'r'],[377,420,'c'],[400,451,'r'],[421,450,'c'],[444,414,'c'],[466,421,'r'],[488,450,'R'],[511,421,'r'],[534,423,'c'],[555,451,'r'],[578,453,'w'],[599,451,'r'],[622,414,'c'],[644,442,'r'],[665,402,'R'],[688,430,'r'],[711,90,'c'],[732,270,'c'],[755,316,'r'],[778,384,'c'],[799,409,'r'],[822,423,'c'],[843,444,'c'],[866,339,'m'],[889,414,'c'],[911,402,'r'],[933,342,'R'],[956,334,'r'],[977,142,'r'],[1000,283,'r'],[1022,274,'r'],[1044,237,'c'],[1067,316,'r'],[1090,354,'R'],[1112,144,'m'],[1134,165,'c'],[1155,250,'r'],[1178,276,'c'],[1200,360,'c'],[1222,399,'w'],[1245,370,'r'],[1268,414,'w'],[1290,349,'r'],[1312,399,'c'],[1334,384,'c'],[1356,453,'d'],[1378,468,'d'],[1399,435,'c'],[1422,379,'r'],[1445,372,'r'],[1466,399,'c'],[1489,429,'c'],[1511,394,'r'],[1533,471,'y'],[1556,423,'c']];
const barsR = [[11,456,'c'],[33,456,'c'],[56,465,'c'],[80,486,'w'],[102,438,'m'],[125,460,'c'],[148,450,'c'],[170,477,'c'],[194,468,'c'],[215,456,'c'],[240,457,'r'],[262,467,'r'],[284,402,'p'],[308,408,'c'],[331,405,'c'],[354,441,'c'],[376,441,'r'],[398,452,'g'],[422,471,'c'],[444,456,'c'],[467,448,'r'],[490,412,'r'],[513,390,'r'],[535,393,'c'],[559,414,'c'],[583,418,'r'],[605,459,'c'],[628,460,'r'],[650,421,'r'],[672,447,'R'],[697,249,'m'],[718,99,'c'],[742,268,'r'],[765,232,'r'],[787,315,'c'],[810,253,'r'],[834,309,'R'],[856,253,'r'],[878,303,'c'],[903,328,'r'],[925,204,'R'],[948,49,'r'],[970,222,'c'],[993,201,'c'],[1017,354,'w'],[1039,321,'c'],[1063,384,'w'],[1085,346,'r'],[1108,366,'c'],[1130,321,'c'],[1154,426,'y'],[1176,450,'w'],[1199,456,'w'],[1221,436,'r'],[1244,297,'R'],[1268,313,'r'],[1290,310,'r'],[1313,315,'c'],[1337,286,'r'],[1358,379,'r'],[1382,393,'c']];

const barColors = { c: CYAN, y: '#ff0', d: '#008000', m: '#f0f', g: '#0f0', w: '#fff', R: '#f00', p: '#ff0080' };
const vl = z => z / 2.09;
const vr = z => 750 + z / 2.148;
const vy = z => 600 + z / 3;

const volWhite = [[43,358,65,392,90,408,110,400,130,405,155,420,175,418,195,420,220,442,240,448,266,438,290,428,310,424,333,422,354,420,377,432,400,443,421,444,444,434,466,434,488,438,511,432,534,435,578,440,622,440,644,441,665,433,690,428,711,355,732,318,755,299,778,298,799,295,822,360,843,398,866,405,889,408,911,403,933,388,956,365,977,320,1000,292,1022,272,1044,250,1067,250,1090,293,1112,258,1134,245,1155,243,1178,238,1200,240,1222,280,1245,325,1268,365,1290,375,1312,385,1334,388,1356,395,1378,415,1399,430,1422,425,1445,422,1466,410,1489,402,1511,394,1533,420,1556,428],
    [0,430,33,440,80,458,125,462,170,464,215,462,240,463,262,466,284,452,308,435,331,424,376,421,398,428,422,440,444,448,490,452,513,437,535,415,559,407,583,403,605,412,628,425,650,435,672,442,697,395,718,345,742,300,765,250,787,232,810,232,834,272,856,272,878,285,903,290,925,282,948,230,970,222,993,205,1017,205,1039,225,1063,295,1085,325,1108,355,1130,350,1154,365,1176,385,1199,405,1221,416,1244,414,1268,385,1290,360,1313,330,1337,305,1358,318,1382,335]];
const volBlue = [[43,317,90,332,132,345,176,353,222,380,266,395,310,403,354,408,400,420,444,424,488,432,534,435,578,438,622,438,665,430,690,430,732,410,778,400,822,398,866,392,911,388,956,370,1000,352,1044,338,1090,330,1134,305,1178,313,1245,314,1290,308,1356,313,1400,322,1445,340,1489,355,1533,368],
    [0,388,33,410,80,424,125,432,170,438,215,442,284,443,331,445,376,450,422,452,467,448,513,440,583,438,650,435,672,434,697,420,742,395,787,380,834,360,878,345,903,340,925,325,948,310,993,295,1039,288,1085,278,1130,271,1154,280,1176,295,1221,316,1290,319,1337,318,1382,334]];
const volGreen = [[43,399,90,397,155,393,266,390,310,387,420,384,534,381,690,378,732,371,778,372,822,379,866,384,1000,384,1067,384,1110,382,1134,375,1290,373,1422,371,1533,372],
    [0,372,100,372,105,375,350,376,370,381,422,389,590,390,650,400,700,400,725,398,780,399,790,401,900,401,925,396,970,388,1040,381,1240,378,1310,372,1340,363,1382,363]];

function drawBar(b, fx) {
    const x = Math.round(fx(b[0]));
    const top = Math.round(vy(b[1]));
    if (b[2] === 'r') {
        return `<rect x="${x - 3 + 0.5}" y="${top + 0.5}" width="7" height="${775 - top}" fill="#000" stroke="${RED}"/>`;
    }
    return `<rect x="${x - 3}" y="${top}" width="8" height="${775 - top}" fill="${barColors[b[2]]}"/>`;
}

function drawVol() {
    const fxs = [vl, vr];
    let s = '';
    [621, 660, 698, 736].forEach(y => { s += gridLine(20, 1431, y); });
    barsL.forEach(b => { s += drawBar(b, vl); });
    barsR.forEach(b => { s += drawBar(b, vr); });
    s += '<line x1="17" x2="1394" y1="775.5" y2="775.5" stroke="#fff"/>';
    [[53,325,350],[120,366,390],[345,435,460],[388,406,422],[455,400,420]].forEach(t => {
        s += `<line x1="${vl(t[0])}" x2="${vl(t[0])}" y1="${vy(t[1])}" y2="${vy(t[2])}" stroke="#0a6060"/>`;
    });
    s += polyline(seriesPoints(volGreen, fxs, vy), '#00ff00', 2);
    s += polyline(seriesPoints(volBlue, fxs, vy), '#2020ff');
    s += polyline(seriesPoints(volWhite, fxs, vy), '#fff');
    [265, 510, 865, 909, 1110].forEach(z => { s += `<path d="M${vl(z) - 4} 778l2 -2h4l2 2z" fill="#ffb030"/>`; });
    [283, 466, 648, 695, 1244].forEach(z => { s += `<path d="M${vr(z) - 4} 778l2 -2h4l2 2z" fill="#ffb030"/>`; });
    s += '<line x1="1431.5" x2="1431.5" y1="594" y2="778" stroke="#c00"/>';
    s += '<line x1="16" x2="1483" y1="594.5" y2="594.5" stroke="#c00"/>';
    [[621, '20000'], [660, '15000'], [698, '10000'], [736, '5000']].forEach(t => {
        s += `<line x1="1431" x2="1438" y1="${t[0] + 0.5}" y2="${t[0] + 0.5}" stroke="#c00"/>` + axisLabel(t[1], t[0], 1478);
    });
    s += '<rect x="1432.5" y="762.5" width="48" height="15" fill="none" stroke="#c00"/>';
    s += '<text x="1437" y="775" font-size="13" fill="#ff3232">X100</text>';
    document.getElementById('volChart').innerHTML = s;
}

function drawInd() {
    let s = '';
    s += '<line x1="16" x2="1483" y1="778.5" y2="778.5" stroke="#c00"/>';
    [831, 863, 896, 928].forEach(y => { s += gridLine(20, 1431, y); });
    s += polyline('20,800 169,800 179,834 190,800 200,834 214,834 223,800 754,800 764,834 779,834 788,800 807,800 817,834 861,834 871,800 891,800 900,834 925,834 935,800 1393,800', '#ffc000');
    [74, 201, 212, 594, 606, 840, 849, 1233, 1243, 1308].forEach(x => {
        s += `<rect x="${x}" y="920" width="2" height="40" fill="#fff"/>`;
    });
    [84, 223, 616, 861, 1255, 1318].forEach(x => {
        s += `<rect x="${x - 1}" y="834" width="2" height="126" fill="#f00"/>`;
        s += `<text x="${x - 1}" y="851" font-size="12" fill="#ffcc00">敢死队买</text>`;
    });
    s += '<rect x="20" y="958" width="1200" height="3" fill="#f00"/>';
    s += polyline('958,959 967,881 978,959', '#f00', 3);
    s += '<rect x="959" y="958" width="18" height="3" fill="#00c0ff"/>';
    s += '<text x="970" y="891" font-size="12" fill="#ffcc00">启动点</text>';
    s += '<line x1="1431.5" x2="1431.5" y1="778" y2="961" stroke="#c00"/>';
    [[800, '100.00'], [831, '80.00'], [863, '60.00'], [896, '40.00'], [928, '20.00']].forEach(t => {
        s += `<line x1="1431" x2="1438" y1="${t[0] + 0.5}" y2="${t[0] + 0.5}" stroke="#c00"/>` + axisLabel(t[1], t[0]);
    });
    document.getElementById('indChart').innerHTML = s;
}

// order book
const sellData = [['卖十','7.00','2336','up'],['卖九','6.99','1458'],['卖八','6.98','1403'],['卖七','6.97','1644'],['卖六','6.96','1046'],['卖五','6.95','851'],['卖四','6.94','325'],['卖三','6.93','260'],['卖二','6.92','1515'],['卖一','6.91','1337']];
const buyData = [['买一','6.90','10514'],['买二','6.89','1539'],['买三','6.88','3468'],['买四','6.87','1143'],['买五','6.86','1416'],['买六','6.85','3452'],['买七','6.84','2028'],['买八','6.83','3590'],['买九','6.82','3277'],['买十','6.81','1751','dn']];

function bookRows(id, rows) {
    document.getElementById(id).innerHTML = rows.map(r => {
        let mark = '';
        if (r[3] === 'up') mark = '<span class="ob-mark mark-up">▲</span>';
        if (r[3] === 'dn') mark = '<span class="ob-mark mark-dn"></span>';
        return `<div class="ob-row"><span class="grey">${r[0]}</span><span class="green">${r[1]}${mark}</span><span class="qty">${r[2]}</span></div>`;
    }).join('');
}

const sellQueue = [10,5,200,5,18,31,100,113,254,5,30,11,24,99,8,3,30,11,10,23,5,30,50,2,20,5,2,20,24,14,45,10,9,6,20,75,10];
const buyQueue = [162,1,10,15,20,50,10,300,10,50,10,11,2,21,10,5,13,100,22,5,4,91,100,50,5,20,10,5,100,20,10,20,10,12,34,20,20,10,69,5,10,3,10,2,20,10,10,6,5,20];

function queueCells(id, data) {
    document.getElementById(id).innerHTML = data.map(n => `<span>${n}</span>`).join('');
}

// tick list, grouped orders are [first row, row count, lines]
const tickQty = [50,2,6,10,10,1,2,5,2,33,50,5,24,20,10,45,29,7,6,58,6,30,7,5,0,3,6,3,0,5,2,7,10];
const sum4 = [[0,1,['50']],[1,2,['9','0.6万'],1],[3,4,['24','1.7万'],1],[7,1,['5']],[8,1,['2']],[9,1,['33']],[10,3,['80','5.5万'],1],[13,1,['20']],[14,1,['10']],[15,4,['88','6.1万'],1],[19,1,['58']],[20,1,['6']],[21,1,['30']],[22,1,['7']],[23,1,['5']],[24,3,['10','0.7万'],1],[27,1,['3']],[28,2,['6','0.4万'],1],[30,2,['10','0.7万'],1],[32,1,['10']]];
const sum5 = [[0,2,['60','4.1万'],1],[2,2,['17','1.2万'],1],[4,2,['10','1'],1],[6,5,['93','6.4万']],[11,1,['5'],1],[12,4,['100','6.9万']],[16,1,['29'],1],[17,1,['7'],1],[18,7,['113','7.8万']],[25,1,['3'],1],[26,3,['10','0.7万'],1],[29,2,['8','0.6万'],1]];

function tickSum(list, col) {
    return list.map(g => {
        const lines = g[2].map(t => `<span>${t}</span>`).join('');
        const boxed = g[3] ? ' boxed' : '';
        return `<div class="tick-sum col${col}${boxed}" style="grid-column:${col};grid-row:${g[0] + 1} / span ${g[1]}">${lines}</div>`;
    }).join('');
}

function drawTicks() {
    let s = '';
    tickQty.forEach((q, i) => {
        const row = i + 1;
        const label = i === 0 ? '<span class="tick-time grey" style="grid-row:1">15:00:00</span>' : `<span class="tick-no" style="grid-column:1;grid-row:${row}">${25 + i}</span>`;
        s += label;
        s += `<span class="tick-price" style="grid-column:2;grid-row:${row}">6.90</span>`;
        s += `<span class="tick-qty" style="grid-column:3;grid-row:${row}">${q}</span>`;
    });
    s += tickSum(sum4, 4) + tickSum(sum5, 5);
    document.getElementById('ticks').innerHTML = s;
}

drawMain();
drawVol();
drawInd();
bookRows('sellRows', sellData);
bookRows('buyRows', buyData);
queueCells('sellQueue', sellQueue);
queueCells('buyQueue', buyQueue);
drawTicks();
```
